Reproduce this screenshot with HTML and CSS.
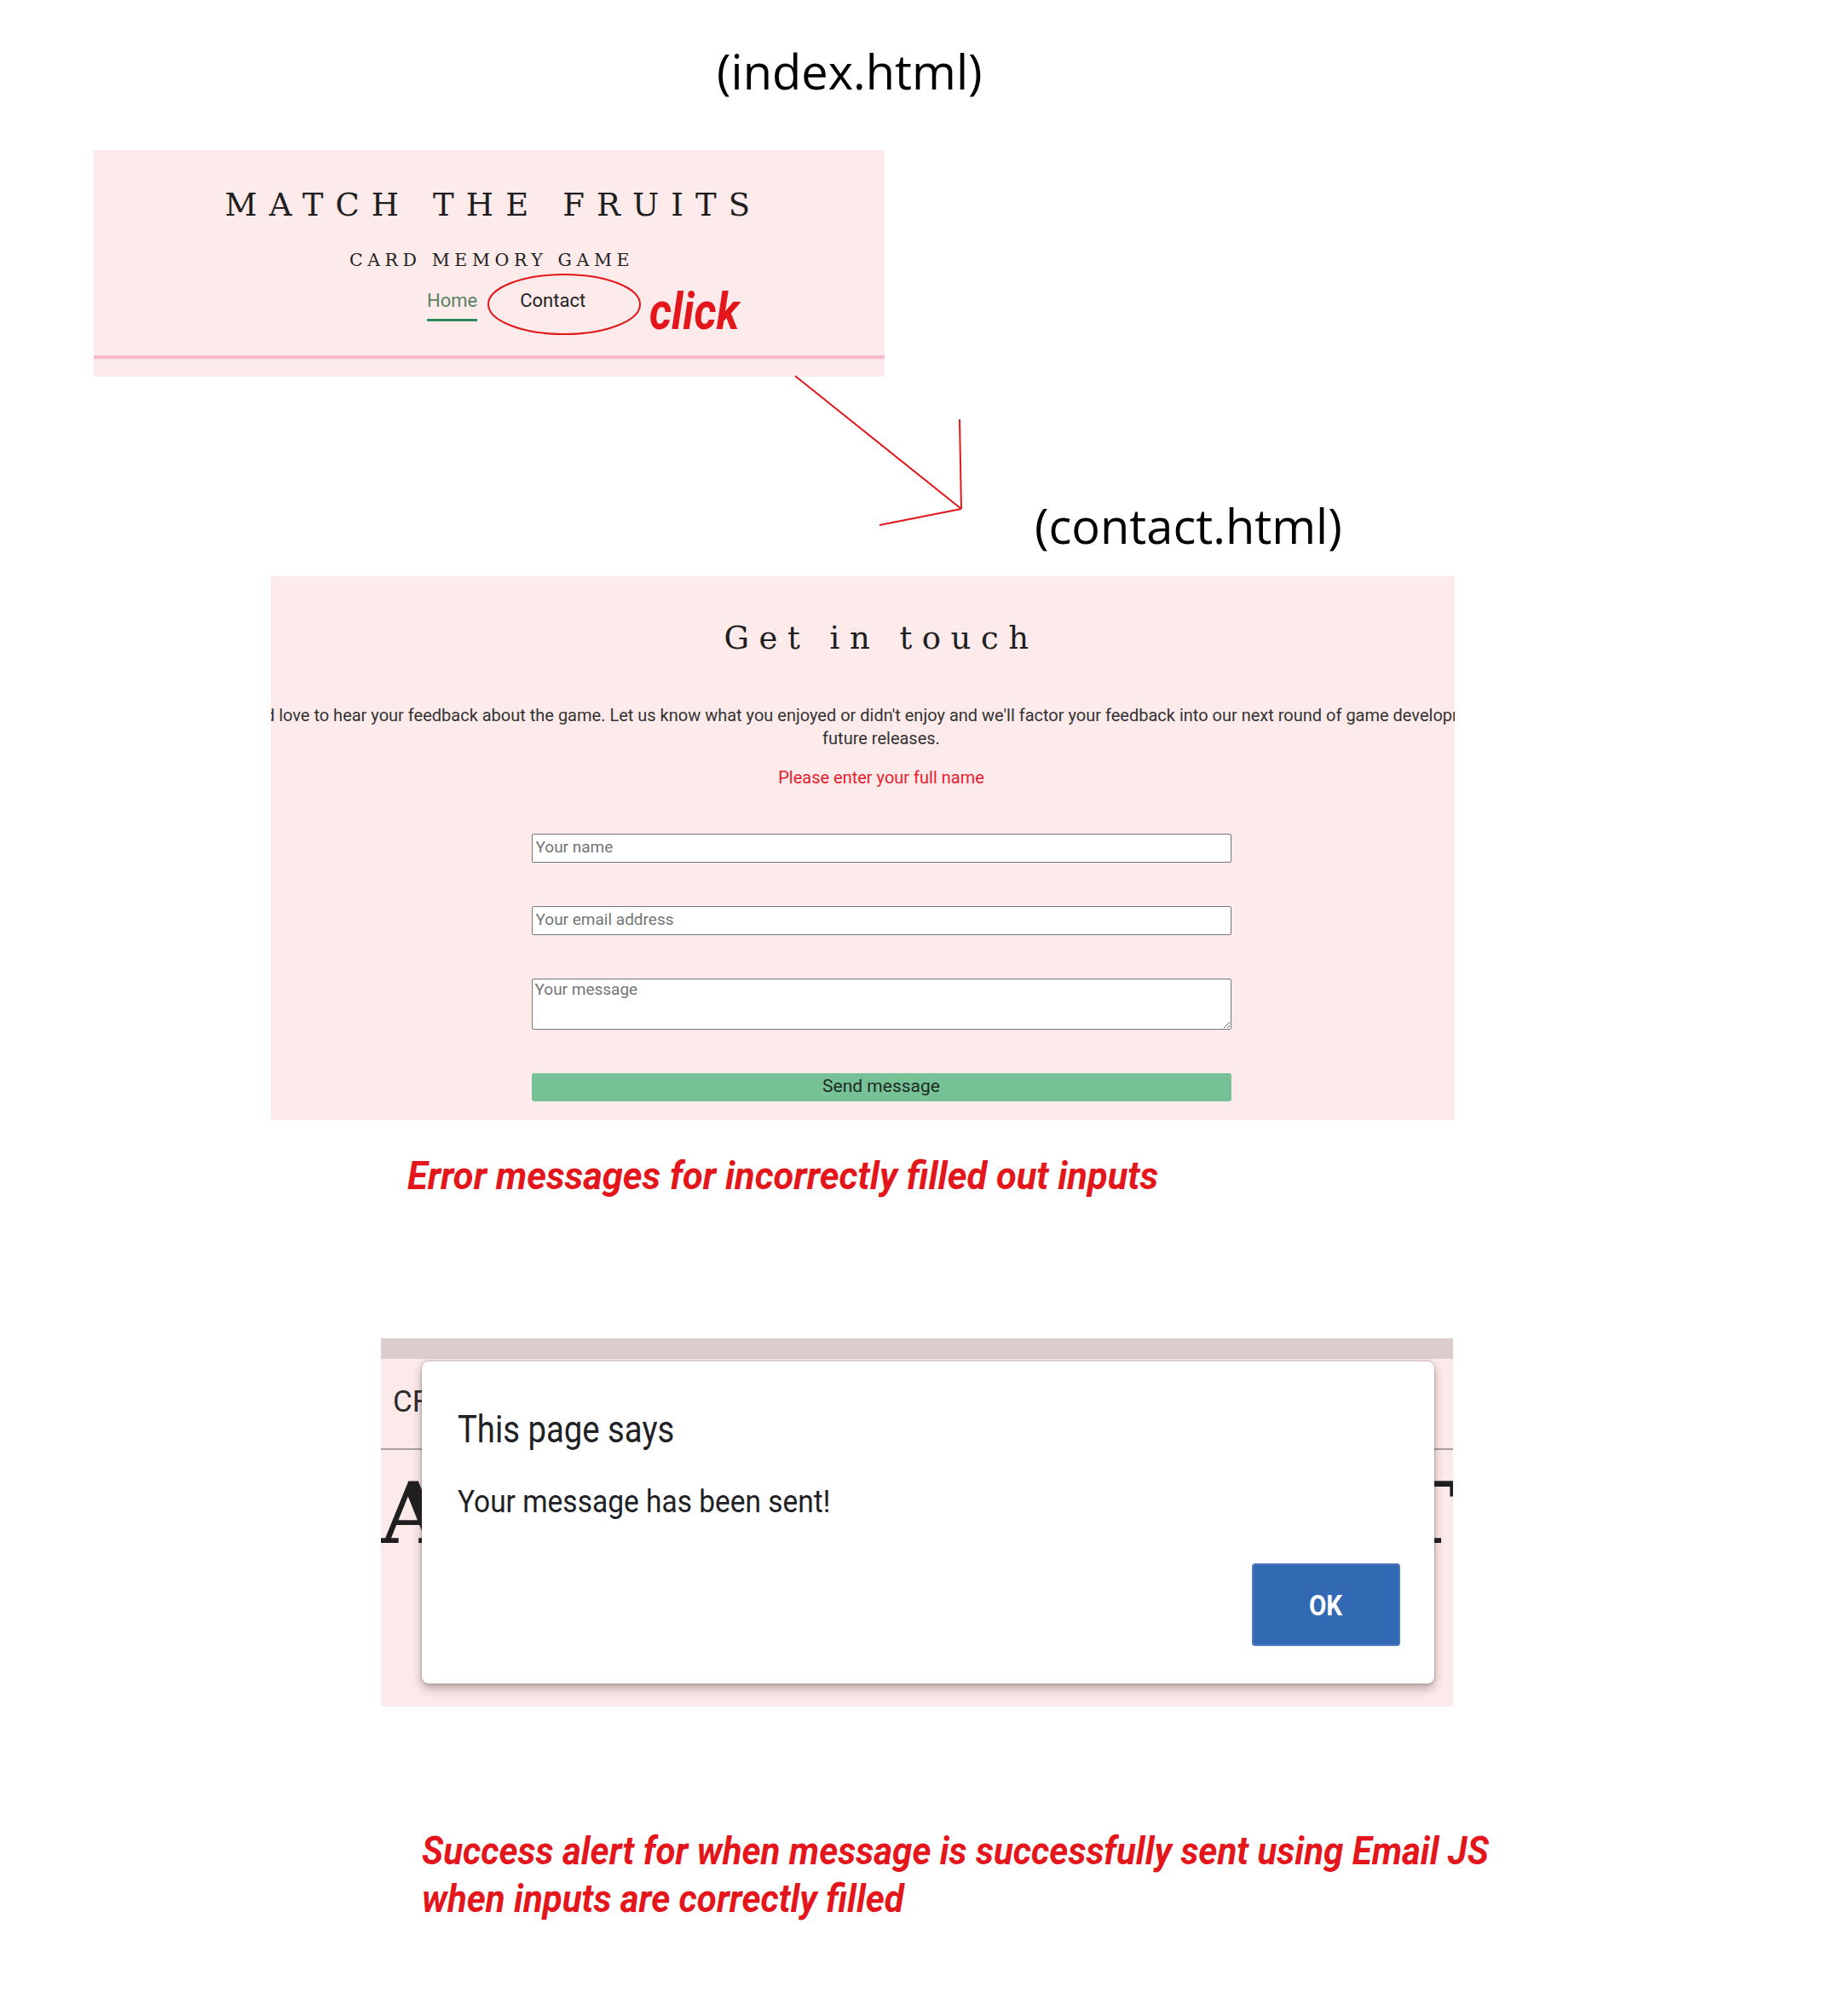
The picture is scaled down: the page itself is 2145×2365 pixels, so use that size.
FILE: index.html
```html
<!DOCTYPE html>
<html lang="en">
<head>
<meta charset="utf-8">
<title>Match the Fruits – contact flow</title>
<link rel="stylesheet" href="styles.css">
</head>
<body>
<div class="canvas">
  <p class="label label-index">(index.html)</p>

  <section class="panel panel-index">
    <h1 class="site-title">MATCH THE FRUITS</h1>
    <p class="site-sub">CARD MEMORY GAME</p>
    <nav class="site-nav">
      <a class="nav-link nav-active">Home</a>
      <a class="nav-link">Contact</a>
    </nav>
    <div class="site-rule"></div>
    <svg class="note-ellipse" width="180" height="72" viewBox="0 0 180 72"><ellipse cx="90" cy="36" rx="89" ry="35" fill="none" stroke="#e3161b" stroke-width="2"/></svg>
    <span class="note-click">click</span>
  </section>

  <svg class="note-arrow" width="220" height="200" viewBox="0 0 220 200"><path d="M13 11 L208 167 M208 167 L206 62 M208 167 L112 186" fill="none" stroke="#e3161b" stroke-width="2"/></svg>

  <p class="label label-contact">(contact.html)</p>

  <section class="panel panel-contact">
    <div class="contact-inner">
      <h2 class="contact-title">Get in touch</h2>
      <p class="contact-intro">We'd love to hear your feedback about the game. Let us know what you enjoyed or didn't enjoy and we'll factor your feedback into our next round of game development and<br>future releases.</p>
      <p class="contact-error">Please enter your full name</p>
      <form class="contact-form">
        <input class="field" type="text" placeholder="Your name">
        <input class="field" type="email" placeholder="Your email address">
        <textarea class="field field-area" placeholder="Your message"></textarea>
        <button class="send" type="button">Send message</button>
      </form>
    </div>
  </section>

  <p class="caption caption-error"><span class="caption-text cap-error">Error messages for incorrectly filled out inputs</span></p>

  <section class="panel panel-alert">
    <div class="alert-strip"></div>
    <p class="alert-cf">CF</p>
    <div class="alert-rule"></div>
    <div class="alert-hero"><span>A</span><span class="hero-t">T</span></div>
    <div class="dialog">
      <p class="dlg-title"><span class="dlg-text">This page says</span></p>
      <p class="dlg-msg"><span class="dlg-text dlg-text-msg">Your message has been sent!</span></p>
      <div class="dlg-actions"><button class="dlg-ok" type="button"><span class="dlg-text">OK</span></button></div>
    </div>
  </section>

  <p class="caption caption-success"><span class="caption-text cap-success">Success alert for when message is successfully sent using Email JS<br>when inputs are correctly filled</span></p>
</div>
</body>
</html>
```
FILE: styles.css
```css
* { box-sizing: border-box; }
body { margin: 0; background: #ffffff; }

.canvas {
  position: relative;
  width: 2145px;
  min-height: 2365px;
  padding-top: 51px;
  font-family: Roboto, "Noto Sans", sans-serif;
  overflow: hidden;
}

.label {
  margin: 0;
  font-family: "Open Sans", "Noto Sans", sans-serif;
  font-size: 56px;
  line-height: 64px;
  color: #000;
}
.label-index { margin-left: 841px; }
.label-contact { margin: 142px 0 0 1214px; }

.panel { background: #fdeaea; }

/* index.html header */
.panel-index {
  position: relative;
  margin: 61px 0 0 110px;
  width: 928px;
  height: 266px;
  padding-top: 43px;
  display: flex;
  flex-direction: column;
  align-items: center;
}
.site-title {
  margin: 0 0 0 10px;
  font-family: "DejaVu Serif", serif;
  font-weight: normal;
  font-size: 37px;
  line-height: 44px;
  letter-spacing: 14.1px;
  color: #1f1f22;
}
.site-sub {
  margin: 30px 0 0 6px;
  font-family: "DejaVu Serif", serif;
  font-size: 20.5px;
  line-height: 24px;
  letter-spacing: 5.6px;
  color: #1f1f22;
}
.site-nav {
  align-self: flex-start;
  margin: 23px 0 0 391px;
  display: flex;
  gap: 50px;
}
.nav-link {
  font-size: 22px;
  line-height: 26px;
  padding-bottom: 8px;
  color: #222;
  border-bottom: 3px solid transparent;
}
.nav-active { color: #5b7f66; border-bottom-color: #2e8b57; }
.site-rule {
  align-self: stretch;
  margin-top: 40px;
  height: 4px;
  background: #f6bcca;
}
.note-ellipse { position: absolute; left: 462px; top: 145px; }
.note-click {
  position: absolute;
  left: 652px;
  top: 160px;
  font-family: Roboto, sans-serif;
  font-weight: bold;
  font-style: italic;
  font-size: 60px;
  line-height: 60px;
  color: #e3161b;
  transform: scaleX(0.86);
  transform-origin: left center;
}
.note-arrow { position: absolute; left: 920px; top: 430px; }

/* contact.html */
.panel-contact {
  margin: 28px 0 0 318px;
  width: 1389px;
  height: 638px;
  overflow: hidden;
}
.contact-inner {
  width: 1432px;
  padding-top: 51px;
  display: flex;
  flex-direction: column;
  align-items: center;
}
.contact-title {
  margin: 0;
  font-family: "DejaVu Serif", serif;
  font-weight: normal;
  font-size: 37px;
  line-height: 44px;
  letter-spacing: 11.5px;
  color: #1f1f22;
}
.contact-intro {
  margin: 55px 0 0;
  font-size: 20px;
  line-height: 27px;
  white-space: nowrap;
  text-align: center;
  color: #333;
}
.contact-error {
  margin: 19px 0 0;
  font-size: 20px;
  line-height: 27px;
  color: #e8202e;
}
.contact-form {
  margin-top: 52px;
  width: 821px;
  display: flex;
  flex-direction: column;
  gap: 51px;
}
.field {
  display: block;
  width: 100%;
  height: 34px;
  margin: 0;
  padding: 0 4px 3px;
  border: 1px solid #767676;
  border-radius: 2px;
  background: #fff;
  font-family: Roboto, sans-serif;
  font-size: 19px;
  color: #222;
}
.field::placeholder { color: #757575; }
.field-area { height: 60px; padding: 1px 3px; resize: vertical; line-height: 22px; }
.send {
  height: 33px;
  padding: 0 0 4px;
  border: none;
  border-radius: 3px;
  background: #76c195;
  font-family: Roboto, sans-serif;
  font-size: 21px;
  color: #1d2b22;
}

/* captions */
.caption {
  margin: 0;
  font-family: Roboto, sans-serif;
  font-weight: bold;
  font-style: italic;
  font-size: 46px;
  line-height: 56px;
  color: #e3161b;
}
.caption-text {
  display: inline-block;
  white-space: nowrap;
  transform-origin: left center;
}
.caption-error { margin: 37px 0 0 478px; }
.cap-error { transform: scaleX(0.944); }
.caption-success { margin: 141px 0 0 495px; }
.cap-success { transform: scaleX(0.915); }

/* alert screenshot */
.panel-alert {
  position: relative;
  margin: 163px 0 0 447px;
  width: 1258px;
  height: 432px;
  overflow: hidden;
  background: #fce9e9;
}
.alert-strip { height: 24px; background: #dccccb; }
.alert-cf {
  margin: 31px 0 0 14px;
  font-size: 35px;
  line-height: 40px;
  color: #2a2a2a;
}
.alert-rule { margin-top: 34px; height: 2px; background: #aaa2a2; }
.alert-hero {
  margin-top: 19px;
  display: flex;
  justify-content: space-between;
  font-family: "DejaVu Serif", serif;
  font-weight: bold;
  font-size: 99px;
  line-height: 110px;
  color: #1f1f22;
}
.hero-t { margin-right: -4px; }
.dialog {
  position: absolute;
  left: 48px;
  top: 27px;
  width: 1188px;
  height: 378px;
  padding: 54px 40px 44px 42px;
  background: #fff;
  border-radius: 8px;
  box-shadow: 0 6px 12px rgba(60, 40, 40, 0.35), 0 0 3px rgba(60, 40, 40, 0.45);
  display: flex;
  flex-direction: column;
  color: #202124;
}
.dlg-text {
  display: inline-block;
  white-space: nowrap;
  transform: scaleX(0.87);
  transform-origin: left center;
}
.dlg-text-msg { transform: scaleX(0.93); }
.dlg-title { margin: 0; font-size: 44px; line-height: 52px; }
.dlg-msg { margin: 37px 0 0; font-size: 36px; line-height: 44px; }
.dlg-actions { margin-top: auto; display: flex; justify-content: flex-end; }
.dlg-ok {
  width: 174px;
  height: 97px;
  border: 2px solid #5079c0;
  border-radius: 4px;
  background: #3169b2;
  color: #fff;
  font-family: Roboto, sans-serif;
  font-weight: bold;
  font-size: 34px;
}
.dlg-ok .dlg-text { transform-origin: center center; }
```
